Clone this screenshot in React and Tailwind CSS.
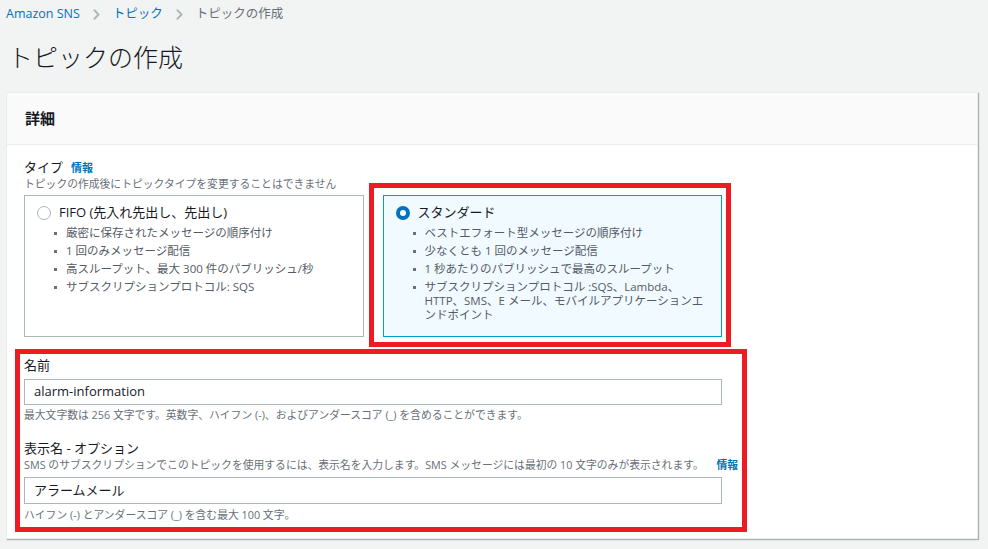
import { FiChevronRight } from "react-icons/fi";

const font = { fontFamily: '"Open Sans", "Noto Sans CJK JP", sans-serif' };

const fifoPoints = [
  ["厳密に保存されたメッセージの順序付け"],
  ["1 回のみメッセージ配信"],
  ["高スループット、最大 300 件のパブリッシュ/秒"],
  ["サブスクリプションプロトコル: SQS"],
];

// last item wraps exactly where the console wraps it
const standardPoints = [
  ["ベストエフォート型メッセージの順序付け"],
  ["少なくとも 1 回のメッセージ配信"],
  ["1 秒あたりのパブリッシュで最高のスループット"],
  [
    "サブスクリプションプロトコル :SQS、Lambda、",
    "HTTP、SMS、E メール、モバイルアプリケーションエ",
    "ンドポイント",
  ],
];

const TypeTile = ({ title, points, selected }) => (
  <div
    className={
      "border pl-[12px] pr-[12px] pt-[8px] pb-[14px] " +
      (selected ? "bg-[#f1faff] border-[#00a1c9]" : "bg-white border-[#aab7b8]")
    }
  >
    <div className="flex items-center gap-[8px] h-[18px]">
      {selected ? (
        <span className="w-[14px] h-[14px] rounded-full border-[4px] border-[#0073bb] bg-white shrink-0" />
      ) : (
        <span className="w-[14px] h-[14px] rounded-full border border-[#aab7b8] bg-white shrink-0" />
      )}
      <span className="text-[13px] text-[#16191f]">{title}</span>
    </div>
    <ul className="mt-[4px] pl-[29px] space-y-[4px]">
      {points.map((lines) => (
        <li key={lines[0]} className="relative text-[11.5px] leading-[14px] text-[#545b64]">
          <span className="absolute -left-[12px] top-[6px] w-[3px] h-[3px] bg-[#687078]" />
          {lines.map((l) => (
            <span key={l} className="block whitespace-nowrap">
              {l}
            </span>
          ))}
        </li>
      ))}
    </ul>
  </div>
);

export default function App() {
  return (
    <div className="min-h-screen bg-[#f2f3f3] pl-[6px] pr-[10px]" style={font}>
      {/* breadcrumb */}
      <div className="flex items-center h-[28px] text-[12.5px]">
        <span className="text-[#0073bb]">Amazon SNS</span>
        <FiChevronRight className="mx-[8px] text-[#aab7b8] w-[17px] h-[17px]" strokeWidth={2.5} />
        <span className="text-[#0073bb]">トピック</span>
        <FiChevronRight className="mx-[8px] text-[#aab7b8] w-[17px] h-[17px]" strokeWidth={2.5} />
        <span className="text-[#687078]">トピックの作成</span>
      </div>

      <h1 className="mt-[12px] ml-[2px] text-[25px] leading-[34px] font-light text-[#16191f]">
        トピックの作成
      </h1>

      {/* card */}
      <div className="mt-[18px] bg-white border border-[#eaeded] shadow-[1px_1px_1px_rgba(0,28,36,0.3)]">
        <div className="h-[52px] bg-[#fafafa] border-b border-[#eaeded] flex items-center px-[18px]">
          <h2 className="text-[15px] font-bold text-[#16191f]">詳細</h2>
        </div>

        <div className="px-[17px] pt-[15px] pb-[16px]">
          <div className="flex items-center h-[16px]">
            <span className="text-[13px] text-[#16191f]">タイプ</span>
            <span className="ml-[8px] text-[11px] font-bold text-[#0073bb]">情報</span>
          </div>
          <p className="mt-[1px] text-[10.8px] leading-[14px] text-[#687078]">
            トピックの作成後にトピックタイプを変更することはできません
          </p>

          <div className="mt-[4px] grid grid-cols-2 gap-[19px] w-[698px]">
            <TypeTile title="FIFO (先入れ先出し、先出し)" points={fifoPoints} />
            <div className="relative grid">
              <TypeTile title="スタンダード" points={standardPoints} selected />
              <div className="absolute -left-[14px] -top-[12px] -right-[9px] -bottom-[10px] border-[5px] border-[#ed1c24] pointer-events-none" />
            </div>
          </div>

          {/* name fields */}
          <div className="relative mt-[21px] w-[714px]">
            <div className="absolute -left-[9px] -top-[9px] -right-[9px] -bottom-[10px] border-[5px] border-[#ed1c24] pointer-events-none" />

            <div className="h-[16px] flex items-center text-[13px] text-[#16191f]">名前</div>
            <div className="mt-[5px] w-[698px] h-[26px] border border-[#aab7b8] flex items-center px-[9px] text-[13px] text-[#16191f]">
              alarm-information
            </div>
            <p className="mt-[3px] text-[10.8px] leading-[14px] text-[#687078]">
              最大文字数は 256 文字です。英数字、ハイフン (-)、およびアンダースコア (_) を含めることができます。
            </p>

            <div className="mt-[19px] h-[16px] flex items-center text-[13px] text-[#16191f]">
              表示名 - オプション
            </div>
            <div className="mt-[1px] flex items-center justify-between text-[10.8px] leading-[14px]">
              <span className="text-[#687078]">
                SMS のサブスクリプションでこのトピックを使用するには、表示名を入力します。SMS メッセージには最初の 10 文字のみが表示されます。
              </span>
              <span className="font-bold text-[#0073bb] whitespace-nowrap">情報</span>
            </div>
            <div className="mt-[5px] w-[698px] h-[27px] border border-[#aab7b8] flex items-center px-[9px] text-[13px] text-[#16191f]">
              アラームメール
            </div>
            <p className="mt-[4px] text-[10.8px] leading-[14px] text-[#687078]">
              ハイフン (-) とアンダースコア (_) を含む最大 100 文字。
            </p>
          </div>
        </div>
      </div>
    </div>
  );
}
